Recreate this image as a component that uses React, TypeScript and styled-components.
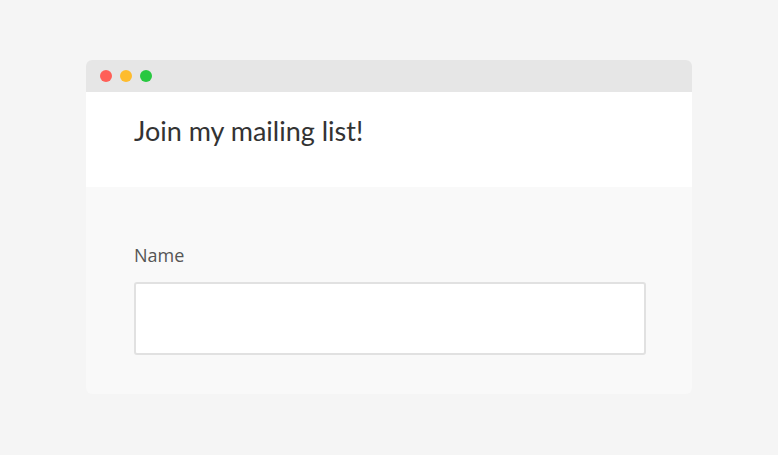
import styled, { createGlobalStyle } from "styled-components";

const GlobalStyle = createGlobalStyle`
  html, body {
    margin: 0;
    padding: 0;
    background: #f5f5f5;
  }
  * {
    box-sizing: border-box;
  }
`;

const Page = styled.div`
  display: flex;
  justify-content: center;
  align-items: flex-start;
  padding-top: 60px;
  min-height: 455px;
`;

const Window = styled.div`
  width: 606px;
  border-radius: 6px;
  overflow: hidden;
  background: #f9f9f9;
`;

const TitleBar = styled.div`
  height: 32px;
  background: #e6e6e6;
  display: flex;
  align-items: center;
  gap: 8px;
  padding-left: 14px;
`;

const Dot = styled.span<{ $color: string }>`
  width: 12px;
  height: 12px;
  border-radius: 50%;
  background: ${(p) => p.$color};
`;

const Header = styled.div`
  background: #fff;
  height: 95px;
  padding: 22px 48px 0;
`;

const Title = styled.h1`
  margin: 0;
  font-family: "Lato", "Open Sans", sans-serif;
  font-weight: 400;
  font-size: 27px;
  line-height: 34px;
  color: #333;
`;

const Body = styled.form`
  padding: 56px 46px 39px 48px;
`;

const Label = styled.label`
  display: block;
  font-family: "Open Sans", "Noto Sans", sans-serif;
  font-size: 18px;
  line-height: 24px;
  color: #555;
  margin-bottom: 15px;
`;

const Input = styled.input`
  display: block;
  width: 100%;
  height: 73px;
  border: 2px solid #e1e1e1;
  border-radius: 3px;
  background: #fff;
  outline: none;
  font-size: 16px;
  padding: 0 12px;
`;

export default function App() {
  return (
    <>
      <GlobalStyle />
      <Page>
        <Window>
          <TitleBar>
            <Dot $color="#ff5f57" />
            <Dot $color="#febc2e" />
            <Dot $color="#28c840" />
          </TitleBar>
          <Header>
            <Title>Join my mailing list!</Title>
          </Header>
          <Body onSubmit={(e) => e.preventDefault()}>
            <Label htmlFor="name">Name</Label>
            <Input id="name" type="text" />
          </Body>
        </Window>
      </Page>
    </>
  );
}
